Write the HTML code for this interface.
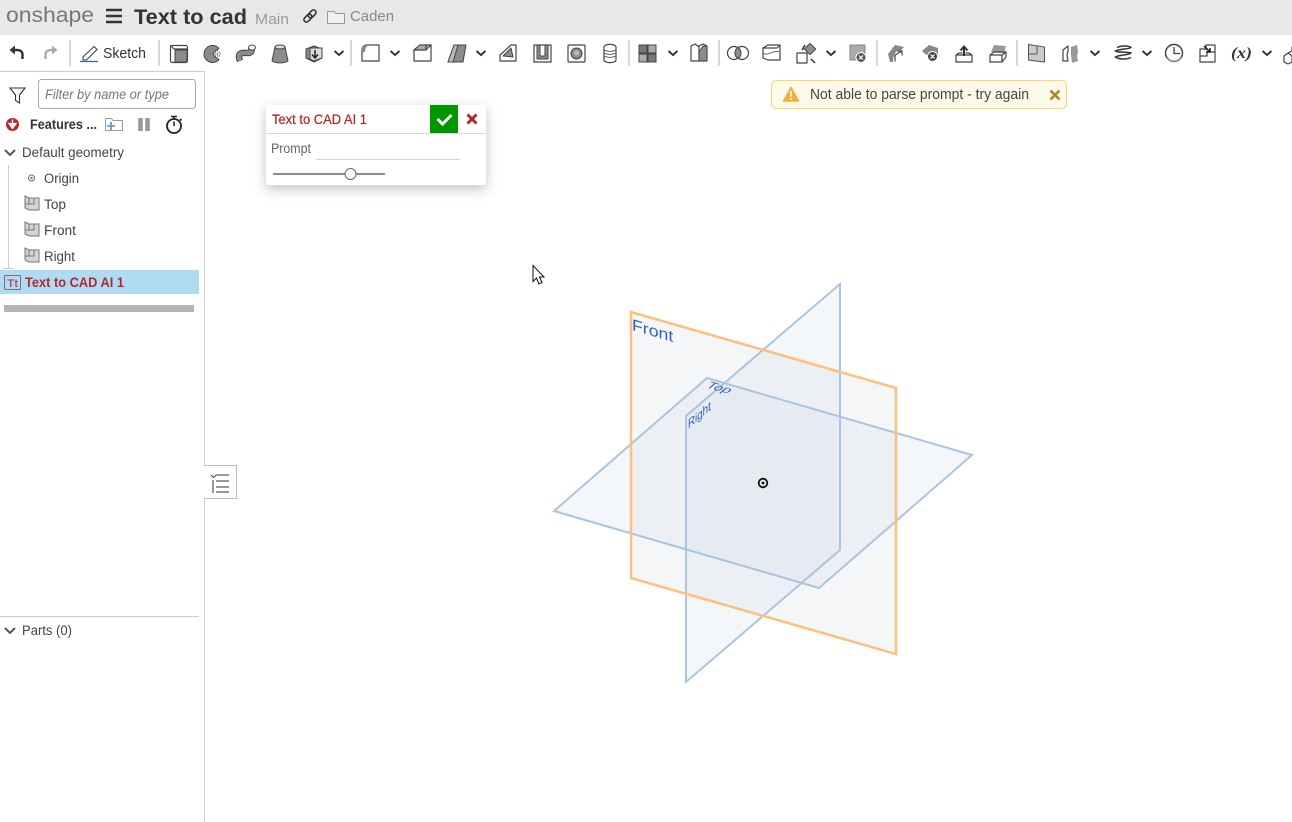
<!DOCTYPE html>
<html><head><meta charset="utf-8"><title>Text to cad</title>
<style>
html,body{margin:0;padding:0;background:#fff;width:1292px;height:822px;overflow:hidden}
svg{display:block;font-family:"Liberation Sans",sans-serif}
.i{fill:none;stroke:#444;stroke-width:1.2;stroke-linejoin:round;stroke-linecap:round}
.g{fill:#8c8c8c;stroke:#444;stroke-width:1;stroke-linejoin:round}
.c{fill:none;stroke:#333;stroke-width:1.9}
.s{stroke:#d8d8d8;stroke-width:2}
.t{font-size:13.5px;fill:#444}
</style></head><body>
<svg width="1292" height="822" viewBox="0 0 1292 822" xmlns="http://www.w3.org/2000/svg">
<defs>
<filter id="sh" x="-20%" y="-30%" width="140%" height="170%"><feDropShadow dx="0" dy="4" stdDeviation="6" flood-color="#000" flood-opacity=".24"/></filter>
<path id="chev" class="c" d="M-4.500-2 0 2 4.500-2"/>
<g id="pl"><path d="M1 1 5 3H15V15H5L1 13Z" fill="#d4d4d4" stroke="#777"/><path d="M5 3V9H1M5 9H10V3" fill="none" stroke="#777"/></g>
</defs>

<!-- header -->
<rect width="1292" height="35" fill="#e8e8e8"/>
<text x="6" y="22" font-size="21" fill="#777" textLength="88" lengthAdjust="spacingAndGlyphs">onshape</text>
<path d="M106 10H122M106 16H122M106 22H122" stroke="#333" stroke-width="2.600"/>
<text x="134" y="24" font-size="21" font-weight="700" fill="#333" textLength="113" lengthAdjust="spacingAndGlyphs">Text to cad</text>
<text x="255" y="24" font-size="14.500" fill="#999" textLength="34" lengthAdjust="spacingAndGlyphs">Main</text>
<g fill="none" stroke="#333" stroke-width="1.600" transform="rotate(-45 310 16)"><rect x="302.500" y="13.500" width="9" height="5" rx="2.500"/><rect x="308.500" y="13.500" width="9" height="5" rx="2.500"/></g>
<path d="M327.500 12V23.500H344.500V13.500H335.500L334 11.500H328Z" fill="#f1f1f1" stroke="#999"/>
<text x="350" y="21" font-size="15" fill="#888" textLength="44" lengthAdjust="spacingAndGlyphs">Caden</text>

<!-- toolbar: undo / redo / sketch -->
<path d="M22.500 59V54.500C22.500 51.500 20 50 17 50H14" fill="none" stroke="#333" stroke-width="2.400"/><path d="M9.500 50 15 45.500V54.500Z" fill="#333"/>
<path d="M45.500 59V54.500C45.500 51.500 48 50 51 50H53" fill="none" stroke="#aaa" stroke-width="2.400"/><path d="M57.500 50 52 45.500V54.500Z" fill="#aaa"/>
<line class="s" x1="70" y1="40" x2="70" y2="66"/>
<path d="M83 57 94 46.500 97 49.500 86.500 60H83Z" fill="none" stroke="#444" stroke-width="1.100"/><path d="M80 61.500H98" stroke="#3a66a8" stroke-width="1.200"/>
<text x="103" y="58" font-size="15" fill="#333" textLength="43" lengthAdjust="spacingAndGlyphs">Sketch</text>
<line class="s" x1="159" y1="40" x2="159" y2="66"/>

<!-- feature icons -->
<g transform="translate(170,45)"><rect x=".5" y=".5" width="17" height="17" rx="2" class="i"/><path class="i" d="M.5 .5 4 4H17"/><rect x="5" y="5" width="12" height="12" fill="#8c8c8c" stroke="#444"/></g>
<g transform="translate(204,45)"><path class="g" d="M15 3.500A8.500 8.500 0 1 0 15 14.500L10.500 11.500 9 9 10.500 6.500Z"/><path d="M5 9H18M13.500 5V13M11 6.500 16 11.500M11 11.500 16 6.500" stroke="#666" stroke-width=".9" stroke-dasharray="1.500 1.200" fill="none"/></g>
<path d="M240 61C236 51 245 53 248 53 252 53 252 50 251 47" fill="none" stroke="#444" stroke-width="6.500"/><path d="M240 61C236 51 245 53 248 53 252 53 252 50 251 47" fill="none" stroke="#8c8c8c" stroke-width="4.500"/><ellipse cx="252" cy="47.500" rx="3.500" ry="2.500" fill="#fff" stroke="#444"/>
<path class="g" d="M275 47 272 61C276 63.500 284 63.500 288 61L285 47Z"/><ellipse cx="280" cy="47" rx="5" ry="2" fill="#ddd" stroke="#444"/>
<g transform="translate(305,45)"><path class="g" d="M1 4 9 1 17 4V13L9 17 1 13Z"/><path d="M5 3H17V13L9 16 5 14Z" fill="#ddd" stroke="#444"/><path d="M10 5V12M7 9.500 10 13 13 9.500" fill="none" stroke="#222" stroke-width="1.500"/></g>
<use href="#chev" x="339" y="53"/>
<line class="s" x1="351" y1="40" x2="351" y2="66"/>
<path class="i" d="M362 61V50C362 47 364 45 367 45H379V61Z"/><path fill="#8c8c8c" d="M362 50C362 47 364 45 367 45H371C367 45 365 48 365 52L362 53Z"/>
<use href="#chev" x="395" y="53"/>
<path class="i" d="M414 61V50L420 45H431V61Z"/><path fill="#aaa" stroke="#444" d="M414 50 420 45H431L426 50Z"/><path class="i" d="M414 50H426V45"/>
<path class="g" d="M454 45H466L463 62H448Z"/><path d="M454 45H458L453 62H448Z" fill="#bbb" stroke="#444"/>
<use href="#chev" x="481" y="53"/>
<path class="i" d="M500 61V55L511 45H516V61Z"/><path class="g" d="M503 56 511 48 513 57Z"/>
<rect x="534" y="45" width="17" height="17" class="i"/><path class="g" d="M537 45V59H548V45H545V56H540V45Z"/>
<rect x="568" y="45" width="17" height="17" rx="1" class="i"/><circle cx="576.500" cy="53.500" r="5.500" fill="#8c8c8c" stroke="#444"/><circle cx="576.500" cy="53" r="2.500" fill="#bbb"/>
<path class="i" d="M604 47C604 43.500 616 43.500 616 47V60C616 63.500 604 63.500 604 60Z"/><path d="M604 50C608 52 612 52 616 50M604 53C608 55 612 55 616 53M604 56C608 58 612 58 616 56" fill="none" stroke="#666"/>
<line class="s" x1="629" y1="40" x2="629" y2="66"/>
<g transform="translate(639,45)"><rect width="8" height="8" fill="#777" stroke="#444"/><rect x="9" width="8" height="8" fill="#aaa" stroke="#444"/><rect y="9" width="8" height="8" fill="#aaa" stroke="#444"/><rect x="9" y="9" width="8" height="8" fill="#777" stroke="#444"/></g>
<use href="#chev" x="673" y="53"/>
<path class="i" d="M691 61V46L695 44 699 47V61ZM699 61V46L703 44 707 46V61Z"/><path class="g" d="M699 61V52L703 46H707V61Z"/>
<line class="s" x1="719" y1="40" x2="719" y2="66"/>
<circle cx="734" cy="53" r="6.500" class="i"/><circle cx="742" cy="53" r="6.500" class="i"/><path class="g" d="M738 47.500A6.500 6.500 0 0 1 738 58.500 6.500 6.500 0 0 1 738 47.500Z" stroke="none"/>
<path class="i" d="M763 48 768 45H780V60H768L763 58Z"/><path d="M763 53C768 57 773 49 780 52" fill="none" stroke="#666"/><path class="i" d="M763 48 H777L780 45"/>
<g transform="translate(797,43)"><rect x="0" y="10" width="10" height="10" class="i"/><rect x="9" y="2" width="8" height="8" class="g" transform="rotate(45 13 6)"/><path d="M5 7 8 2M14 16 18 20" stroke="#333" stroke-width="1.500"/></g>
<use href="#chev" x="831" y="53"/>
<g transform="translate(850,45)"><rect width="15" height="15" fill="#aaa" stroke="#888"/><circle cx="11" cy="12.500" r="5" fill="#555" stroke="#fff"/><path d="M9 10.500 13 14.500M13 10.500 9 14.500" stroke="#fff" stroke-width="1.200"/></g>
<line class="s" x1="877" y1="40" x2="877" y2="66"/>
<g transform="translate(887,44)"><path d="M1 10 8 1 17 3 14 6C9 6 6 10 6 18H3Z" fill="#888"/><path class="i" d="M8 17V11L15 7M11 7H15V11"/></g>
<g transform="translate(921,44)"><path d="M1 7 8 1 17 4V11L8 13Z" fill="#888"/><circle cx="11.500" cy="12.500" r="5" fill="#444" stroke="#fff"/><path d="M9.500 10.500 13.500 14.500M13.500 10.500 9.500 14.500" stroke="#fff" stroke-width="1.200"/></g>
<g transform="translate(955,44)"><path class="i" d="M1 11V18H17V11L14 9H11M7 9H4L1 11H17"/><path d="M9 12V3M5.500 6.500 9 2.500 12.500 6.500" fill="none" stroke="#333" stroke-width="2"/></g>
<g transform="translate(989,44)"><path d="M2 8 5 1 17 2 15 9Z" fill="#999"/><path class="i" d="M1 11 5 8H17V13L13 18H1ZM1 11H13V18M13 11 17 8"/></g>
<line class="s" x1="1017" y1="40" x2="1017" y2="66"/>
<g transform="translate(1028,44)"><path d="M.5 .5 16.500 3V18L.5 16Z" fill="#ccc" stroke="#555"/><path d="M9 2V10H.5" fill="none" stroke="#555"/></g>
<g transform="translate(1062,45)"><path class="i" d="M1 5 6 1V6L5 10 6 16H1Z"/><path d="M9 2 15 0 16 7 15 11 16 16 10 18 9 10Z" fill="#999"/></g>
<use href="#chev" x="1095" y="53"/>
<path d="M1117 47.500C1122 45 1130 46 1131 47.500 1130 49 1118 49 1115.500 51 1118 53 1130 51.500 1131 53 1130 55 1118 55 1115.500 57 1118 59 1126 60 1131 57.500" fill="none" stroke="#333" stroke-width="1.500"/>
<use href="#chev" x="1147" y="53"/>
<circle cx="1174" cy="53" r="8.500" fill="none" stroke="#444" stroke-width="1.500"/><path d="M1174 47V53.500H1180" fill="none" stroke="#444" stroke-width="1.300"/><path d="M1167 57A8 8 0 0 0 1181 57" fill="none" stroke="#999" stroke-width="1.500"/>
<g transform="translate(1199,44)"><path class="i" d="M1 5H7V1H16V18H1Z"/><path class="i" d="M1 12H8V8H16"/><path d="M5 2 11 8M11 4V8H7" fill="none" stroke="#222" stroke-width="1.600"/></g>
<text x="1231" y="58" font-size="16" font-weight="700" font-style="italic" font-family="Liberation Serif,serif" fill="#333" textLength="21" lengthAdjust="spacingAndGlyphs">(x)</text>
<use href="#chev" x="1267" y="53"/>
<g transform="translate(1284,44)"><path class="i" d="M4 9 8 7V3L11 1 14 3V7L11 9M0 12 4 9 8 12V18L4 20 0 18Z"/></g>

<!-- left panel -->
<path d="M0 71.500H204.500V822" fill="none" stroke="#ccc"/>
<path d="M10 88H25L19.500 95V103L15.500 100.500V95Z" fill="none" stroke="#333" stroke-width="1.100"/>
<rect x="38.500" y="79.500" width="157" height="29" rx="3" fill="#fff" stroke="#aaa"/>
<text x="45" y="99" font-size="14" font-style="italic" fill="#777" textLength="124" lengthAdjust="spacingAndGlyphs">Filter by name or type</text>
<circle cx="12.500" cy="124.500" r="6.500" fill="#b3282d"/><path d="M12.500 119.500V124M9 123.500H16L12.500 128.500Z" stroke="#fff" stroke-width="1.300" fill="#fff"/>
<text x="30" y="129" font-size="14" font-weight="700" fill="#333" textLength="67" lengthAdjust="spacingAndGlyphs">Features ...</text>
<path d="M105.500 119V130.500H122.500V120.500H113L111.500 118.500H106Z" fill="#fff" stroke="#999"/><path d="M111 122V130M107 126H115" stroke="#6a97cf" stroke-width="1.800"/>
<path d="M140.500 118V131M147.500 118V131" stroke="#999" stroke-width="4.500"/>
<circle cx="174" cy="126" r="7" fill="none" stroke="#222" stroke-width="1.800"/><path d="M174 126V121.500M171 116.500H177M174 117V119M180 119 181.500 120.500" fill="none" stroke="#222" stroke-width="1.600"/>
<path d="M5 150 10 155 15 150" fill="none" stroke="#555" stroke-width="2"/>
<text x="22" y="157" class="t" textLength="102" lengthAdjust="spacingAndGlyphs">Default geometry</text>
<path d="M8.500 165V268M3 268.500H13" fill="none" stroke="#ccc"/>
<circle cx="31.500" cy="178" r="3" fill="none" stroke="#666"/><circle cx="31.500" cy="178" r="1.200" fill="#777"/>
<text x="44" y="183" class="t" textLength="35" lengthAdjust="spacingAndGlyphs">Origin</text>
<use href="#pl" x="24" y="195"/><text x="44" y="209" class="t" textLength="22" lengthAdjust="spacingAndGlyphs">Top</text>
<use href="#pl" x="24" y="221"/><text x="44" y="235" class="t" textLength="32" lengthAdjust="spacingAndGlyphs">Front</text>
<use href="#pl" x="24" y="247"/><text x="44" y="261" class="t" textLength="31" lengthAdjust="spacingAndGlyphs">Right</text>
<rect y="270" width="199" height="24" fill="#afdcf3"/>
<rect x="4.500" y="275.500" width="16" height="14" rx="1" fill="none" stroke="#8a6a70"/>
<text x="7" y="287" font-size="11" fill="#b3282d" textLength="11" lengthAdjust="spacingAndGlyphs">Tt</text>
<text x="25" y="287" font-size="13.500" font-weight="700" fill="#b3282d" textLength="99" lengthAdjust="spacingAndGlyphs">Text to CAD AI 1</text>
<rect x="4" y="305" width="190" height="7" fill="#b5b5b5"/>
<line x1="0" y1="616.500" x2="199" y2="616.500" stroke="#ccc"/>
<path d="M5 628 10 633 15 628" fill="none" stroke="#555" stroke-width="2"/>
<text x="22" y="635" class="t" textLength="50" lengthAdjust="spacingAndGlyphs">Parts (0)</text>

<!-- list tab -->
<path d="M204.500 465.500H236.500V498.500H204.500" fill="#fff" stroke="#bbb"/>
<rect x="204" y="466" width="2" height="32" fill="#fff"/>
<path d="M216 475H229M216 481H229M216 487H229M216 492H229" stroke="#333" stroke-width="1.100"/>
<path d="M213 480V493" stroke="#999" stroke-width="2"/><path d="M211 475 213.500 477.500 216 475" fill="none" stroke="#444"/>

<!-- feature dialog -->
<rect x="266" y="105" width="220" height="80" fill="#fff" filter="url(#sh)"/>
<line x1="266" y1="133.500" x2="486" y2="133.500" stroke="#d8d8d8"/>
<text x="272" y="124" font-size="14" fill="#b3282d" stroke="#b3282d" stroke-width=".25" textLength="95" lengthAdjust="spacingAndGlyphs">Text to CAD AI 1</text>
<rect x="430" y="105" width="28" height="28" fill="#009600"/>
<path d="M437.500 119 442.500 124 451.500 115" fill="none" stroke="#fff" stroke-width="3"/>
<path d="M467.500 114.500 476.500 123.500M476.500 114.500 467.500 123.500" stroke="#b3282d" stroke-width="3"/>
<text x="271" y="153" font-size="13.500" fill="#666" textLength="40" lengthAdjust="spacingAndGlyphs">Prompt</text>
<line x1="316" y1="159.500" x2="460" y2="159.500" stroke="#d4d4d4"/>
<line x1="273" y1="174" x2="385" y2="174" stroke="#666" stroke-width="1.500"/>
<circle cx="350.500" cy="174" r="5.500" fill="#fff" stroke="#666"/>

<!-- toast -->
<rect x="771.500" y="80.500" width="295" height="28" rx="5" fill="#fef9e8" stroke="#fbd774"/>
<path d="M791 87.500 798.500 101H783.500Z" fill="#f5ad3b" stroke="#f5ad3b" stroke-width="1.500" stroke-linejoin="round"/>
<path d="M791 91V96.500M791 98V100" stroke="#fff" stroke-width="1.600"/>
<text x="810" y="99" font-size="14.500" fill="#444" textLength="219" lengthAdjust="spacingAndGlyphs">Not able to parse prompt - try again</text>
<path d="M1050.500 90.500 1059.500 99.500M1059.500 90.500 1050.500 99.500" stroke="#b47f24" stroke-width="2.400"/>

<!-- planes -->
<path d="M840 284V550L686 682V416Z" fill="#cfdcea" fill-opacity=".22"/>
<path d="M707 378 972 455 819 588 554 511Z" fill="#cfdcea" fill-opacity=".26"/>
<path d="M631 312 896 388V654L631 578Z" fill="#d5dae3" fill-opacity=".24"/>
<path d="M840 284V550L686 682V416Z" fill="none" stroke="#a9c5df" stroke-width="2"/>
<path d="M707 378 972 455 819 588 554 511Z" fill="none" stroke="#a9c5df" stroke-width="2"/>
<path d="M631 312 896 388V654L631 578Z" fill="none" stroke="#fdc07c" stroke-width="2.500"/>
<text transform="matrix(.96,.28,0,1,632,330)" font-size="16" fill="#2e63bb" textLength="43" lengthAdjust="spacingAndGlyphs">Front</text>
<text transform="matrix(.96,.28,-.755,.656,705,387)" font-size="12" fill="#2e63bb" textLength="24" lengthAdjust="spacingAndGlyphs">Top</text>
<text transform="matrix(.76,-.65,0,1,688,429)" font-size="13" fill="#2e63bb" textLength="30" lengthAdjust="spacingAndGlyphs">Right</text>
<circle cx="763" cy="483" r="4.300" fill="none" stroke="#111" stroke-width="1.800"/><circle cx="763" cy="483" r="1.400" fill="#111"/>

<!-- cursor -->
<path d="M533 265.500V281.500L536.500 278 539 284 542 282.500 539.500 277H544Z" fill="#fff" stroke="#111"/>
</svg>
</body></html>
